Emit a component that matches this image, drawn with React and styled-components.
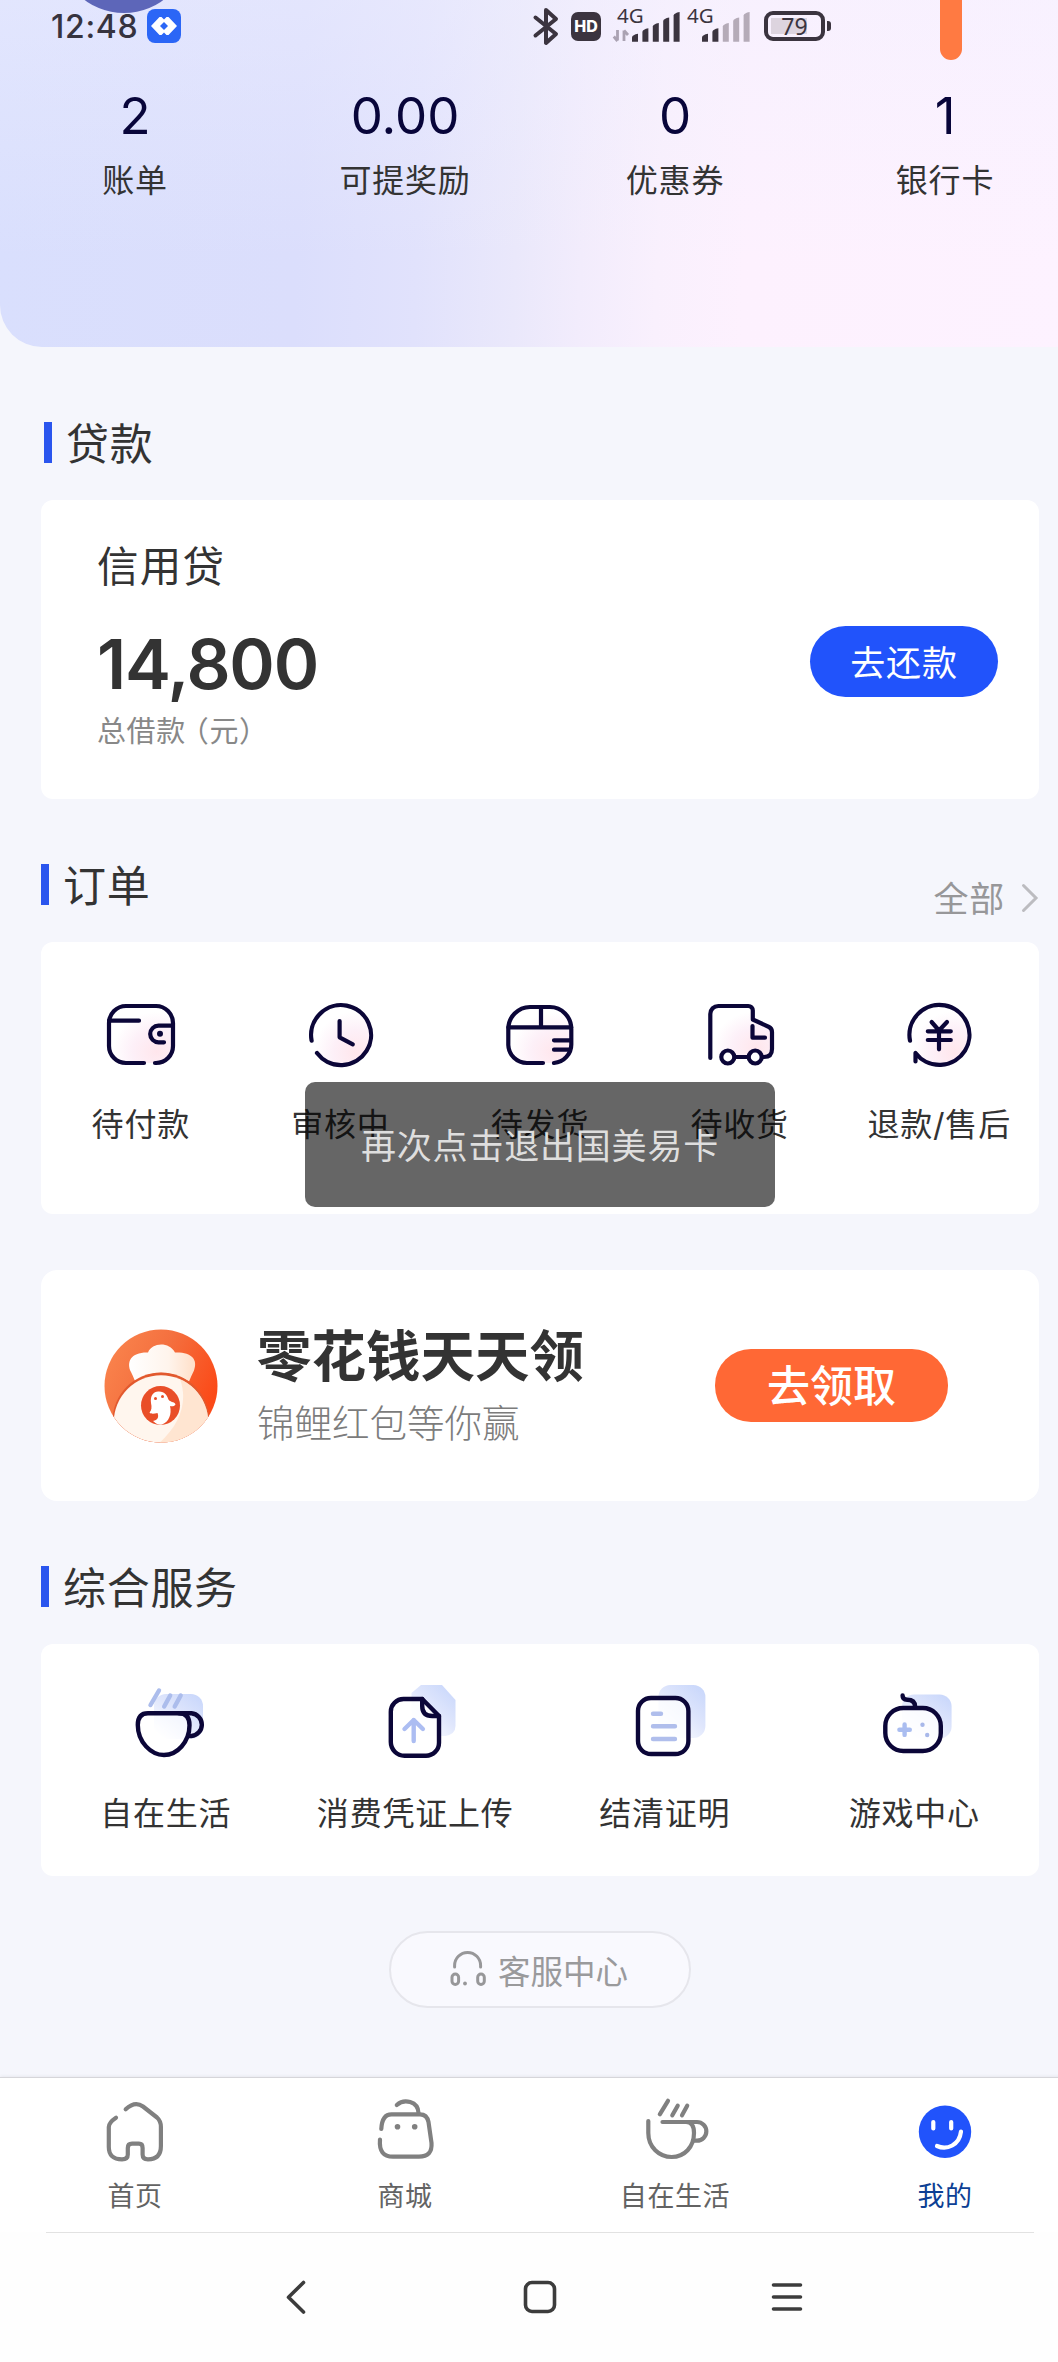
import React from 'react';
import styled, { createGlobalStyle } from 'styled-components';

const stats = [
    { value: '2', label: '账单' },
    { value: '0.00', label: '可提奖励' },
    { value: '0', label: '优惠券' },
    { value: '1', label: '银行卡' },
];

const WalletIcon = () => (
    <LineIcon viewBox="0 0 80 80">
        <path d="M43 68H25a17 17 0 0 1-17-17V28a17 17 0 0 1 17-17h30a17 17 0 0 1 17 17v23a17 17 0 0 1-17 17h-1" fill="url(#pink)" />
        <path d="M8 25.7h30M72 30.7H57.500a8.300 8.300 0 0 0 0 16.600H63" />
        <circle cx="59" cy="38.700" r="3" fill="#0b0638" stroke="none" />
    </LineIcon>
);

const ClockIcon = () => (
    <LineIcon viewBox="0 0 80 80">
        <path d="M11.600 45.700A30 30 0 1 1 17 58" fill="url(#pink)" />
        <path d="M39.600 26v16.300l13.200 7" />
    </LineIcon>
);

const PackageIcon = () => (
    <LineIcon viewBox="0 0 80 80">
        <path d="M43 68H27A18.700 18.700 0 0 1 8.300 50V34A22 22 0 0 1 30 12h20a21.300 22 0 0 1 21.300 22v15A18.700 18.700 0 0 1 54 68" fill="url(#pink)" />
        <path d="M8.300 32.300h63M41 12v20M54 45.300h17M54 54.700h16" />
    </LineIcon>
);

const TruckIcon = () => (
    <LineIcon viewBox="0 0 80 80">
        <path d="M10.300 63V19a8 8 0 0 1 8-8h30a4.500 4.500 0 0 1 4.500 4.500v9L69 32q3 1.500 3 5v17q0 8-8 8H34.500" fill="url(#pink)" />
        <path d="M52.500 31v11.700H65" />
        <circle cx="27.800" cy="62" r="6.500" fill="#fff" />
        <circle cx="55.200" cy="62" r="6.500" fill="#fff" />
    </LineIcon>
);

const RefundIcon = () => (
    <LineIcon viewBox="0 0 80 80">
        <path d="M11 45.700A30 30 0 1 1 16.500 58v8.500" fill="url(#pink)" />
        <path d="M32.600 27l7.400 8.500 8-8.500M40 35.500v18.800M28.800 36.300h23M28.800 45h23" />
    </LineIcon>
);

const CupIcon = () => (
    <ServiceSvg viewBox="0 0 80 80">
        <rect x="28" y="14" width="49" height="45" rx="12" fill="url(#blue)" stroke="none" />
        <path d="M33 10.500L24.500 25M44.200 15.500l-6 11M54.700 15.500l-6 11" stroke="#acbdec" />
        <path d="M22 33.300h31q10.500 0 10.500 12C63.500 62 51 75 38 75S11.800 62 11.800 45q0-11.700 10.200-11.700z" fill="#fff" fillOpacity=".6" />
        <path d="M53 33.300h12.500a11.400 11.400 0 0 1 0 22.700h-2" />
    </ServiceSvg>
);

const UploadIcon = () => (
    <ServiceSvg viewBox="0 0 80 80">
        <path d="M46 5h21l13.500 15v26q0 8-10 10H36.500V13z" fill="url(#blue)" stroke="none" />
        <path d="M47.200 19H28.500a12.700 12.700 0 0 0-12.700 12.700V62a13.700 13.700 0 0 0 13.700 13.700H51A13 13 0 0 0 64 62.700V36z" fill="#fff" fillOpacity=".85" />
        <path d="M47.200 19v7c0 7 4 10 10 10H64" />
        <path d="M38.700 61V40M29.500 49l9.200-9 9.200 9" stroke="#acbdf2" />
    </ServiceSvg>
);

const ListIcon = () => (
    <ServiceSvg viewBox="0 0 80 80">
        <rect x="33.400" y="5" width="47" height="53" rx="12" fill="url(#blue)" stroke="none" />
        <rect x="13" y="18" width="50.400" height="56" rx="13" fill="#fff" fillOpacity=".75" />
        <path d="M28 33.700h8M28 46.300h22M28 59h22" stroke="#b0beec" />
    </ServiceSvg>
);

const GameIcon = () => (
    <ServiceSvg viewBox="0 0 80 80">
        <rect x="28" y="14.500" width="49.600" height="44" rx="12" fill="url(#blue)" stroke="none" />
        <rect x="11.300" y="28" width="55.500" height="43" rx="18" fill="#fff" fillOpacity=".8" />
        <path d="M28.600 15.500q0 4.300 4.500 4.300 8 0 8 7" />
        <path d="M30.600 44.500v10.400M25.400 49.700h10.400" stroke="#aabdf0" />
        <circle cx="48.500" cy="44.700" r="2.200" fill="#a8b8ea" stroke="none" />
        <circle cx="53.200" cy="55" r="2.200" fill="#a8b8ea" stroke="none" />
    </ServiceSvg>
);

const HomeTab = () => (
    <TabSvg viewBox="0 0 64 64">
        <path d="M22.700 9.300Q32 .5 40 6.500L54 17.500Q57.900 21 57.900 27V46Q57.900 59.300 45 59.300 39.600 59.300 39.600 54.500V48Q39.600 43.700 36 43.700H29Q24.800 43.700 24.800 48V54.500Q24.800 59.300 19 59.300 5.800 59.300 5.800 47V27Q5.800 22.500 13 17.700" />
    </TabSvg>
);

const ShopTab = () => (
    <TabSvg viewBox="0 0 64 64">
        <path d="M23.800 5C31-1.500 45 1 45.500 13" />
        <path d="M8.300 29Q9 14.300 18.500 14.300H47Q54 14.300 55.500 22L58.500 43Q59.500 56.700 46 56.700H20Q5.500 56.700 7 39.500" />
        <circle cx="24.500" cy="26.700" r="2.800" fill="#808080" stroke="none" />
        <circle cx="41.700" cy="26.700" r="2.800" fill="#808080" stroke="none" />
    </TabSvg>
);

const LifeTab = () => (
    <TabSvg viewBox="0 0 64 64">
        <path d="M25 .8l-8.200 13.500M34.700 5.700l-5.400 9.600M44.200 5.700L39 15.300" />
        <path d="M5.300 21v12C5.300 47 16 57 28.700 57S51 47 51 33q0-11-8-11H19.500" />
        <path d="M43 22h11a9.300 9.300 0 0 1 0 18.700h-4" />
    </TabSvg>
);

const MineTab = () => (
    <TabSvg viewBox="0 0 64 64">
        <circle cx="32" cy="31.700" r="26.200" fill="#2153fb" stroke="none" />
        <path d="M20.300 22v6.500M38.200 22v6.500M24 46c10 4.500 22.500-1 24-14.500" stroke="#fff" />
    </TabSvg>
);

const orders = [
    { label: '待付款', Icon: WalletIcon },
    { label: '审核中', Icon: ClockIcon },
    { label: '待发货', Icon: PackageIcon },
    { label: '待收货', Icon: TruckIcon },
    { label: '退款/售后', Icon: RefundIcon },
];

const services = [
    { label: '自在生活', Icon: CupIcon },
    { label: '消费凭证上传', Icon: UploadIcon },
    { label: '结清证明', Icon: ListIcon },
    { label: '游戏中心', Icon: GameIcon },
];

const tabs = [
    { label: '首页', Icon: HomeTab },
    { label: '商城', Icon: ShopTab },
    { label: '自在生活', Icon: LifeTab },
    { label: '我的', Icon: MineTab, active: true },
];

// 信号格：active 为点亮的格数
const Signal = ({ active, arrows }) => (
    <SignalBox>
        <SignalType>4G</SignalType>
        <svg width="68" height="31" viewBox="0 0 68 31">
            {arrows && <path d="M4.500 19v10.500M4.500 30L.8 25.500M11 30V19.500M11 19.500l4 4.500" stroke="#aaa2b2" strokeWidth="2.800" fill="none" />}
            {[0, 1, 2, 3, 4].map(i => (
                <path
                    key={i}
                    d={`M${19 + i * 10.4} 30.700v-${4.5 + i * 5.4}q.5-2.500 6-3.500v${8 + i * 5.4}z`}
                    fill={i < active ? '#3b343f' : '#b5abb8'}
                />
            ))}
        </svg>
    </SignalBox>
);

const App = () => (
    <Screen>
        <GlobalStyle />
        <Defs>
            <radialGradient id="pink" cx=".75" cy=".8" r=".7">
                <stop offset="0" stopColor="#ffe6ec" />
                <stop offset=".55" stopColor="#fdf0f8" />
                <stop offset="1" stopColor="#fff" />
            </radialGradient>
            <linearGradient id="blue" x1="1" y1="0" x2=".2" y2="1">
                <stop offset="0" stopColor="#c6d5fb" />
                <stop offset=".5" stopColor="#dfe6fc" />
                <stop offset="1" stopColor="#fff" />
            </linearGradient>
            <linearGradient id="orange" x1="0" y1="0" x2="1" y2=".5">
                <stop offset="0" stopColor="#fb8850" />
                <stop offset=".5" stopColor="#f4703f" />
                <stop offset="1" stopColor="#fb4a18" />
            </linearGradient>
            <linearGradient id="cream" x1="0" y1="0" x2="1" y2="0">
                <stop offset="0" stopColor="#fff" />
                <stop offset=".6" stopColor="#fff4ec" />
                <stop offset="1" stopColor="#ffdfc8" />
            </linearGradient>
        </Defs>

        <Page>
            <Header>
                <Avatar />
                <Ribbon />
                <StatusBar>
                    <Time>12:48</Time>
                    <svg width="34" height="34" viewBox="0 0 34 34">
                        <rect width="34" height="34" rx="8" fill="#2b66f6" />
                        <path d="M4 17l8.500-9h2l2.500 2.500L19.500 8h2l8.500 9-8.500 9h-2L17 23.500 14.500 26h-2z" fill="#fff" />
                        <path d="M17 13l4 4-4 4-4-4z" fill="#2b66f6" />
                    </svg>
                    <StatusIcons>
                        <svg width="26" height="39" viewBox="0 0 26 39">
                            <path d="M2.500 10.500L23 27 13 36V3l10 9L2.500 28.500" fill="none" stroke="#3b343f" strokeWidth="4" strokeLinejoin="round" strokeLinecap="round" />
                        </svg>
                        <Hd>HD</Hd>
                        <Signal active={5} arrows />
                        <Signal active={2} />
                        <Battery>79</Battery>
                    </StatusIcons>
                </StatusBar>
                <Stats>
                    {stats.map(s => (
                        <Stat key={s.label}>
                            <StatValue>{s.value}</StatValue>
                            <Label>{s.label}</Label>
                        </Stat>
                    ))}
                </Stats>
            </Header>

            <Content>
                <SectionHead $indent={3}>
                    <SectionTitle>贷款</SectionTitle>
                </SectionHead>
                <LoanCard>
                    <div>
                        <LoanName>信用贷</LoanName>
                        <LoanAmount>14,800</LoanAmount>
                        <LoanNote>总借款<Paren>（</Paren>元）</LoanNote>
                    </div>
                    <RepayButton>去还款</RepayButton>
                </LoanCard>

                <SectionHead>
                    <SectionTitle>订单</SectionTitle>
                    <More>
                        全部
                        <svg width="18" height="30" viewBox="0 0 18 30">
                            <path d="M2.500 2.500L15 15 2.500 27.500" fill="none" stroke="#bcbcc0" strokeWidth="3" strokeLinecap="round" />
                        </svg>
                    </More>
                </SectionHead>
                <OrderCard>
                    {orders.map(({ label, Icon }) => (
                        <OrderItem key={label}>
                            <Icon />
                            <Label>{label}</Label>
                        </OrderItem>
                    ))}
                    <Toast>再次点击退出国美易卡</Toast>
                </OrderCard>

                <PromoCard>
                    <svg width="114" height="114" viewBox="0 0 114 114">
                        <clipPath id="round"><circle cx="57" cy="57" r="56.500" /></clipPath>
                        <g clipPath="url(#round)">
                            <rect width="114" height="114" fill="url(#orange)" />
                            <path d="M31 52q-2-5-4-9c-5-10 0-20 17-19.500 4-10 21-11 27 0 17-.5 23 7 19 18q-3 6-5 11-28-17-54-.5z" fill="url(#cream)" />
                            <circle cx="57" cy="92" r="48.500" fill="#e2592e" />
                            <circle cx="57" cy="93.500" r="47.300" fill="#fff6ee" />
                            <path d="M76 50c8 22 1 46-23 66h70V60z" fill="#ffdcc2" opacity=".65" clipPath="url(#belly)" />
                            <clipPath id="belly"><circle cx="57" cy="93.500" r="47.300" /></clipPath>
                        </g>
                        <circle cx="56.500" cy="76.500" r="19.500" fill="#e94e28" />
                        <path d="M47 74c-1-8 3-12 8-11.500 6 0 8 4 9 7 1 4 7 3 7.500 6-1 2-4 2-5.500 1.500 2 8-1 16-8 18.500-5 1-7-2-9-3.500 5-1 6-4 4.500-8-4 1-7 1-8-.5 2-2 2.500-5 1.500-9.500z" fill="#fff" />
                        <circle cx="51.500" cy="69.500" r="1.500" fill="#e94e28" />
                        <circle cx="58.500" cy="67.500" r="1.500" fill="#e94e28" />
                    </svg>
                    <PromoText>
                        <PromoTitle>零花钱天天领</PromoTitle>
                        <PromoSub>锦鲤红包等你赢</PromoSub>
                    </PromoText>
                    <ClaimButton>去领取</ClaimButton>
                </PromoCard>

                <SectionHead>
                    <SectionTitle>综合服务</SectionTitle>
                </SectionHead>
                <ServiceCard>
                    {services.map(({ label, Icon }) => (
                        <ServiceItem key={label}>
                            <Icon />
                            <Label>{label}</Label>
                        </ServiceItem>
                    ))}
                </ServiceCard>

                <SupportButton>
                    <svg width="40" height="40" viewBox="0 0 40 40" fill="none" stroke="#979799" strokeWidth="3" strokeLinecap="round">
                        <path d="M6.600 18v-1.500a13 13 0 0 1 26 0V18" />
                        <rect x="4" y="25" width="6.600" height="10.500" rx="3.300" />
                        <rect x="29.700" y="25" width="6.600" height="10.500" rx="3.300" />
                        <circle cx="17" cy="34.500" r="1.900" fill="#979799" stroke="none" />
                    </svg>
                    客服中心
                </SupportButton>
            </Content>

            <TabBar>
                {tabs.map(({ label, Icon, active }) => (
                    <Tab key={label} $active={active}>
                        <Icon />
                        {label}
                    </Tab>
                ))}
            </TabBar>

            <SystemNav>
                <svg width="34" height="34" viewBox="0 0 34 34">
                    <path d="M25.500 2.500L10.500 17.300l15 14.700" />
                </svg>
                <svg width="34" height="34" viewBox="0 0 34 34">
                    <rect x="2.500" y="2.500" width="29" height="29" rx="6.500" />
                </svg>
                <svg width="34" height="34" viewBox="0 0 34 34">
                    <path d="M5.500 5h27M5.500 17h27M5.500 29h27" />
                </svg>
            </SystemNav>
        </Page>
    </Screen>
);

export default App;

const GlobalStyle = createGlobalStyle`
    * { box-sizing: border-box; }
    body { margin: 0; background: #f5f6fc; overflow: hidden; }
    svg { display: block; flex: none; overflow: visible; }
`;
const Screen = styled.div`
    height: 2362px;
    overflow: hidden;
    font-family: Inter, 'Noto Sans CJK SC', sans-serif;
    color: #333;
`;
const Defs = styled.svg.attrs({ width: 0, height: 0 })`
    position: absolute;
`;
const Page = styled.div`
    width: 1080px;
    height: 2362px;
    display: flex;
    flex-direction: column;
    background: #f5f6fc;
`;

const Header = styled.header`
    position: relative;
    flex: none;
    height: 347px;
    overflow: hidden;
    border-bottom-left-radius: 42px;
    background:
        linear-gradient(180deg, rgba(240, 240, 255, .4), rgba(240, 240, 255, 0) 75%),
        linear-gradient(92deg, #d9dffd 0%, #dbdefc 28%, #e1e2fc 39%, #eae8fb 48%, #f2ecfc 54%, #f9f0fd 61%, #fdf1fe 69%, #fdf2ff 100%);
`;
const Avatar = styled.div`
    position: absolute;
    left: 58px;
    top: -119px;
    width: 132px;
    height: 132px;
    border-radius: 50%;
    background: #5d66b9;
`;
const Ribbon = styled.div`
    position: absolute;
    left: 940px;
    top: -30px;
    width: 22px;
    height: 90px;
    border-radius: 11px;
    background: #ff7a42;
`;
const StatusBar = styled.div`
    position: relative;
    display: flex;
    align-items: center;
    height: 52px;
    padding-left: 51px;
`;
const Time = styled.div`
    width: 96px;
    font-size: 32px;
    line-height: 32px;
    font-weight: 500;
    letter-spacing: .7px;
    padding-top: 2px;
    color: #36333f;
`;
const StatusIcons = styled.div`
    display: flex;
    align-items: center;
    margin-left: 352px;
`;
const Hd = styled.div`
    width: 30px;
    height: 29px;
    margin-left: 12px;
    border-radius: 7px;
    background: #3b343f;
    color: #fff;
    font-size: 16px;
    line-height: 29px;
    font-weight: 800;
    text-align: center;
`;
const SignalBox = styled.div`
    position: relative;
    width: 70px;
    height: 31px;
    margin-left: 12px;
    & + & { margin-left: 0; }
`;
const SignalType = styled.span`
    position: absolute;
    left: 4px;
    top: -6px;
    font-family: 'Noto Sans', sans-serif;
    font-size: 20.500px;
    line-height: 20px;
    color: #3b343f;
`;
const Battery = styled.div`
    position: relative;
    width: 61px;
    height: 30px;
    margin-left: 11px;
    border: 4px solid #3b343f;
    border-radius: 9px;
    background: linear-gradient(90deg, #ddd4df 76%, transparent 76%) 3px 3px / 48px 16px no-repeat;
    font-family: 'Noto Sans', sans-serif;
    font-size: 23px;
    line-height: 22px;
    text-align: center;
    color: #3b343f;
    &::after {
        content: '';
        position: absolute;
        right: -10px;
        top: 6px;
        width: 4px;
        height: 10px;
        border-radius: 0 3px 3px 0;
        background: #3b343f;
    }
`;
const Stats = styled.div`
    display: grid;
    grid-template-columns: repeat(4, 270px);
    padding-top: 34px;
`;
const Stat = styled.div`
    display: flex;
    flex-direction: column;
    align-items: center;
    gap: 15px;
`;
const StatValue = styled.div`
    font-size: 51px;
    line-height: 60px;
    color: #08053a;
`;
const Label = styled.div`
    font-size: 32px;
    line-height: 40px;
    letter-spacing: .8px;
    white-space: nowrap;
`;

const Content = styled.main`
    display: flex;
    flex-direction: column;
    padding: 10px 41px 0;
`;
const SectionHead = styled.div`
    display: flex;
    justify-content: space-between;
    height: 41px;
    margin: 65px 0 37px;
    padding-left: ${p => p.$indent || 0}px;
`;
const SectionTitle = styled.h2`
    margin: 0;
    padding-left: 14px;
    border-left: 8px solid #2a55ee;
    font-size: 43px;
    line-height: 45px;
    font-weight: 400;
    letter-spacing: .7px;
    height: 41px;
`;
const More = styled.div`
    display: flex;
    align-items: center;
    gap: 16px;
    padding-top: 29px;
    font-size: 35px;
    line-height: 40px;
    letter-spacing: .8px;
    color: #979799;
    svg { margin-top: -2px; }
`;
const Card = styled.section`
    background: #fff;
    border-radius: 12px;
`;
const LoanCard = styled(Card)`
    display: flex;
    justify-content: space-between;
    height: 299px;
    padding: 42px 41px 0 56px;
`;
const LoanName = styled.div`
    font-size: 41.500px;
    line-height: 50px;
    letter-spacing: 1.2px;
`;
const LoanAmount = styled.div`
    margin-top: 36px;
    font-size: 69px;
    line-height: 72px;
    font-weight: 600;
    letter-spacing: -1.2px;
`;
const LoanNote = styled.div`
    margin-top: 12px;
    font-size: 29px;
    line-height: 40px;
    letter-spacing: .6px;
    color: #888;
`;
const Paren = styled.span`
    margin-left: 8.5px;
    font-feature-settings: 'halt';
`;
const RepayButton = styled.button`
    width: 188px;
    height: 71px;
    margin-top: 84px;
    padding: 0 0 3px;
    border: none;
    border-radius: 36px;
    background: #2153fb;
    color: #fff;
    font: inherit;
    font-size: 35px;
    letter-spacing: .8px;
`;
const OrderCard = styled(Card)`
    position: relative;
    display: grid;
    grid-template-columns: repeat(5, 1fr);
    height: 272px;
    padding-top: 53px;
`;
const OrderItem = styled.div`
    display: flex;
    flex-direction: column;
    align-items: center;
    gap: 30px;
`;
const LineIcon = styled.svg`
    width: 80px;
    height: 80px;
    fill: none;
    stroke: #0b0638;
    stroke-width: 4.2;
    stroke-linecap: round;
    stroke-linejoin: round;
`;
const Toast = styled.div`
    position: absolute;
    left: 264px;
    top: 140px;
    width: 470px;
    height: 125px;
    border-radius: 10px;
    background: rgba(0, 0, 0, .6);
    color: #dedede;
    font-size: 35px;
    line-height: 128px;
    letter-spacing: .8px;
    text-align: center;
    white-space: nowrap;
`;
const PromoCard = styled(Card)`
    display: flex;
    align-items: center;
    height: 231px;
    margin-top: 56px;
    padding-left: 63px;
    border-radius: 16px;
`;
const PromoText = styled.div`
    width: 458px;
    margin-left: 39px;
    padding-top: 5px;
`;
const PromoTitle = styled.div`
    font-size: 54.500px;
    line-height: 64px;
    font-weight: 700;
`;
const PromoSub = styled.div`
    margin-top: 8px;
    font-size: 37.500px;
    line-height: 56px;
    font-weight: 300;
    color: #7c7c7c;
`;
const ClaimButton = styled(RepayButton)`
    width: 233px;
    height: 73px;
    margin: 0;
    padding-bottom: 6px;
    background: #ff6835;
    font-size: 43px;
    font-weight: 500;
    letter-spacing: 0;
`;
const ServiceCard = styled(Card)`
    display: grid;
    grid-template-columns: repeat(4, 1fr);
    height: 232px;
    padding-top: 36px;
`;
const ServiceItem = styled(OrderItem)`
    gap: 34px;
`;
const ServiceSvg = styled(LineIcon)`
    stroke-width: 4.4;
`;
const SupportButton = styled.button`
    display: flex;
    align-items: center;
    align-self: center;
    width: 302px;
    height: 77px;
    margin-top: 55px;
    padding: 0 0 1px 57px;
    gap: 10px;
    border: 2px solid #e6e6ec;
    border-radius: 39px;
    background: #f9f9fe;
    font: inherit;
    font-size: 32.500px;
    font-weight: 400;
    color: #9a9a9c;
    white-space: nowrap;
`;

const TabBar = styled.nav`
    display: grid;
    grid-template-columns: repeat(4, 270px);
    flex: none;
    height: 155px;
    margin-top: 69px;
    border-top: 1px solid #d6d6da;
    box-shadow: 0 -1px 3px rgba(0, 0, 0, .06);
    background: #fff;
`;
const Tab = styled.div`
    display: flex;
    flex-direction: column;
    align-items: center;
    gap: 15px;
    padding-top: 22px;
    font-size: 27px;
    line-height: 36px;
    letter-spacing: .6px;
    color: ${p => p.$active ? '#0d3f94' : '#636363'};
`;
const TabSvg = styled.svg`
    width: 64px;
    height: 64px;
    fill: none;
    stroke: #808080;
    stroke-width: 4.2;
    stroke-linecap: round;
    stroke-linejoin: round;
`;
const SystemNav = styled.nav`
    flex: 1;
    display: flex;
    justify-content: center;
    gap: 211px;
    padding-top: 48px;
    background: linear-gradient(#e2e2e2, #e2e2e2) 46px 0 / 988px 1px no-repeat, #fefefe;
    svg {
        fill: none;
        stroke: #3c3c3c;
        stroke-width: 3.6;
        stroke-linecap: round;
        stroke-linejoin: round;
    }
`;
